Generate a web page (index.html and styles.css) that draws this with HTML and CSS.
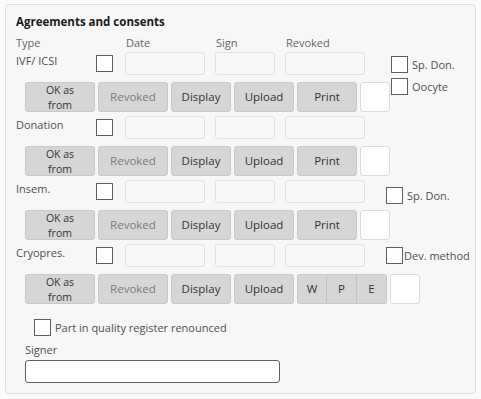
FILE: index.html
```html
<!DOCTYPE html>
<html lang="en">
<head>
  <meta charset="UTF-8">
  <meta name="viewport" content="width=device-width, initial-scale=1.0">
  <title>Agreements and consents</title>
  <link rel="stylesheet" href="styles.css">
</head>
<body>
  <div class="panel">
    <h2 class="panel-title">Agreements and consents</h2>

    <div class="head">
      <span class="head-type">Type</span>
      <span class="head-date">Date</span>
      <span class="head-sign">Sign</span>
      <span class="head-rev">Revoked</span>
    </div>

    <!-- IVF / ICSI -->
    <div class="group">
      <div class="fields">
        <span class="type">IVF/ ICSI</span>
        <input type="checkbox" class="box">
        <input type="text" class="field date" disabled>
        <input type="text" class="field sign" disabled>
        <input type="text" class="field rev" disabled>
        <div class="extra extra-ivf">
          <label class="opt"><input type="checkbox" class="box">Sp. Don.</label>
          <label class="opt"><input type="checkbox" class="box">Oocyte</label>
        </div>
      </div>
      <div class="actions">
        <button class="btn btn-ok">OK as<br>from</button>
        <button class="btn btn-rev">Revoked</button>
        <button class="btn btn-sm">Display</button>
        <button class="btn btn-sm">Upload</button>
        <button class="btn btn-sm">Print</button>
        <span class="slot"></span>
      </div>
    </div>

    <!-- Donation -->
    <div class="group">
      <div class="fields">
        <span class="type">Donation</span>
        <input type="checkbox" class="box">
        <input type="text" class="field date" disabled>
        <input type="text" class="field sign" disabled>
        <input type="text" class="field rev" disabled>
      </div>
      <div class="actions">
        <button class="btn btn-ok">OK as<br>from</button>
        <button class="btn btn-rev">Revoked</button>
        <button class="btn btn-sm">Display</button>
        <button class="btn btn-sm">Upload</button>
        <button class="btn btn-sm">Print</button>
        <span class="slot"></span>
      </div>
    </div>

    <!-- Insemination -->
    <div class="group">
      <div class="fields">
        <span class="type">Insem.</span>
        <input type="checkbox" class="box">
        <input type="text" class="field date" disabled>
        <input type="text" class="field sign" disabled>
        <input type="text" class="field rev" disabled>
        <div class="extra extra-insem">
          <label class="opt"><input type="checkbox" class="box">Sp. Don.</label>
        </div>
      </div>
      <div class="actions">
        <button class="btn btn-ok">OK as<br>from</button>
        <button class="btn btn-rev">Revoked</button>
        <button class="btn btn-sm">Display</button>
        <button class="btn btn-sm">Upload</button>
        <button class="btn btn-sm">Print</button>
        <span class="slot"></span>
      </div>
    </div>

    <!-- Cryopreservation -->
    <div class="group">
      <div class="fields">
        <span class="type">Cryopres.</span>
        <input type="checkbox" class="box">
        <input type="text" class="field date" disabled>
        <input type="text" class="field sign" disabled>
        <input type="text" class="field rev" disabled>
        <div class="extra extra-cryo">
          <label class="opt opt-tight"><input type="checkbox" class="box">Dev. method</label>
        </div>
      </div>
      <div class="actions">
        <button class="btn btn-ok">OK as<br>from</button>
        <button class="btn btn-rev">Revoked</button>
        <button class="btn btn-sm">Display</button>
        <button class="btn btn-sm">Upload</button>
        <div class="btn-split">
          <button class="btn btn-part">W</button>
          <button class="btn btn-part">P</button>
          <button class="btn btn-part">E</button>
        </div>
        <span class="slot"></span>
      </div>
    </div>

    <label class="quality"><input type="checkbox" class="box">Part in quality register renounced</label>

    <div class="signer">
      <label for="signer-input">Signer</label>
      <input type="text" id="signer-input" class="signer-input">
    </div>
  </div>
</body>
</html>
```

FILE: styles.css
```css
body {
  margin: 0;
  background-color: #fafafa;
  font-family: "Open Sans", "Noto Sans", Arial, sans-serif;
  font-size: 11px;
  color: #505050;
}
.panel {
  width: 471px;
  height: 390px;
  box-sizing: border-box;
  margin: 4px 0 0 5px;
  padding: 9px 10px 0 10px;
  background-color: #f7f7f7;
  border: 1px solid #dedede;
  border-radius: 4px;
}
.panel-title {
  margin: 0;
  font-size: 11.5px;
  font-weight: 700;
  line-height: 16px;
  color: #1a1a1a;
}
.head {
  display: flex;
  height: 16px;
  margin-top: 5px;
  line-height: 16px;
  color: #666;
}
.head-type { width: 110px; }
.head-date { width: 90px; }
.head-sign { width: 70px; }

/* ====== rows ====== */
.group {
  margin-top: 4px;
}
.head + .group {
  margin-top: 1px;
}
.fields {
  display: flex;
  align-items: flex-start;
  height: 23px;
}
.fields > * {
  flex: none;
}
.type {
  width: 80px;
  line-height: 16px;
  padding-top: 1px;
  white-space: nowrap;
}
.box {
  -webkit-appearance: none;
  appearance: none;
  flex: none;
  width: 17px;
  height: 17px;
  margin: 3px 12px 0 0;
  background-color: #fff;
  border: 1px solid #5f5f5f;
  border-radius: 0;
  box-sizing: border-box;
}
.field {
  height: 23px;
  margin: 0 10px 0 0;
  padding: 0 4px;
  box-sizing: border-box;
  background-color: #f8f8f8;
  border: 1px solid #e1e1e1;
  border-radius: 3px;
}
.field.date,
.field.rev {
  width: 80px;
}
.field.sign {
  width: 60px;
}
.field.rev {
  margin-right: 0;
}

.extra {
  display: flex;
  flex-direction: column;
  gap: 5px;
}
.extra-ivf { margin: 4px 0 0 26px; }
.extra-insem { margin: 7px 0 0 21px; }
.extra-cryo { margin: 3px 0 0 21px; }
.opt {
  display: flex;
  align-items: center;
  line-height: 16px;
  white-space: nowrap;
}
.opt .box {
  margin: 0 4px 0 0;
}
.opt-tight .box {
  margin-right: 1px;
}

/* ====== buttons ====== */
.actions {
  display: flex;
  gap: 3px;
  height: 30px;
  margin-top: 7px;
  padding-left: 9px;
}
.actions > * {
  flex: none;
}
.btn {
  height: 30px;
  padding: 0;
  box-sizing: border-box;
  font-family: inherit;
  font-size: 11.5px;
  line-height: 14px;
  color: #333;
  background-color: #d6d6d6;
  border: 1px solid #c8c8c8;
  border-radius: 3px;
}
.btn-ok,
.btn-rev {
  width: 70px;
}
.btn-ok {
  font-size: 10.5px;
  line-height: 14.5px;
}
.btn-rev {
  color: #7a7a7a;
}
.btn-sm {
  width: 60px;
}
.btn-split {
  display: flex;
}
.btn-split .btn-part {
  width: 30px;
  border-radius: 0;
  border-right-color: #c2c2c2;
}
.btn-split .btn-part + .btn-part {
  border-left: none;
  width: 30px;
}
.btn-split .btn-part:first-child {
  border-radius: 3px 0 0 3px;
}
.btn-split .btn-part:last-child {
  border-radius: 0 3px 3px 0;
  border-right-color: #c8c8c8;
}
.slot {
  width: 30px;
  height: 30px;
  box-sizing: border-box;
  background-color: #fff;
  border: 1px solid #dcdcdc;
  border-radius: 3px;
}

/* ====== bottom ====== */
.quality {
  display: flex;
  align-items: center;
  margin: 15px 0 0 18px;
  line-height: 17px;
}
.quality .box {
  margin: 0 4px 0 0;
}
.signer {
  margin: 5px 0 0 9px;
}
.signer label {
  display: block;
  line-height: 17px;
}
.signer-input {
  display: block;
  width: 255px;
  height: 23px;
  margin: 2px 0 0 0;
  box-sizing: border-box;
  background-color: #fff;
  border: 1px solid #606060;
  border-radius: 3px;
}
```
